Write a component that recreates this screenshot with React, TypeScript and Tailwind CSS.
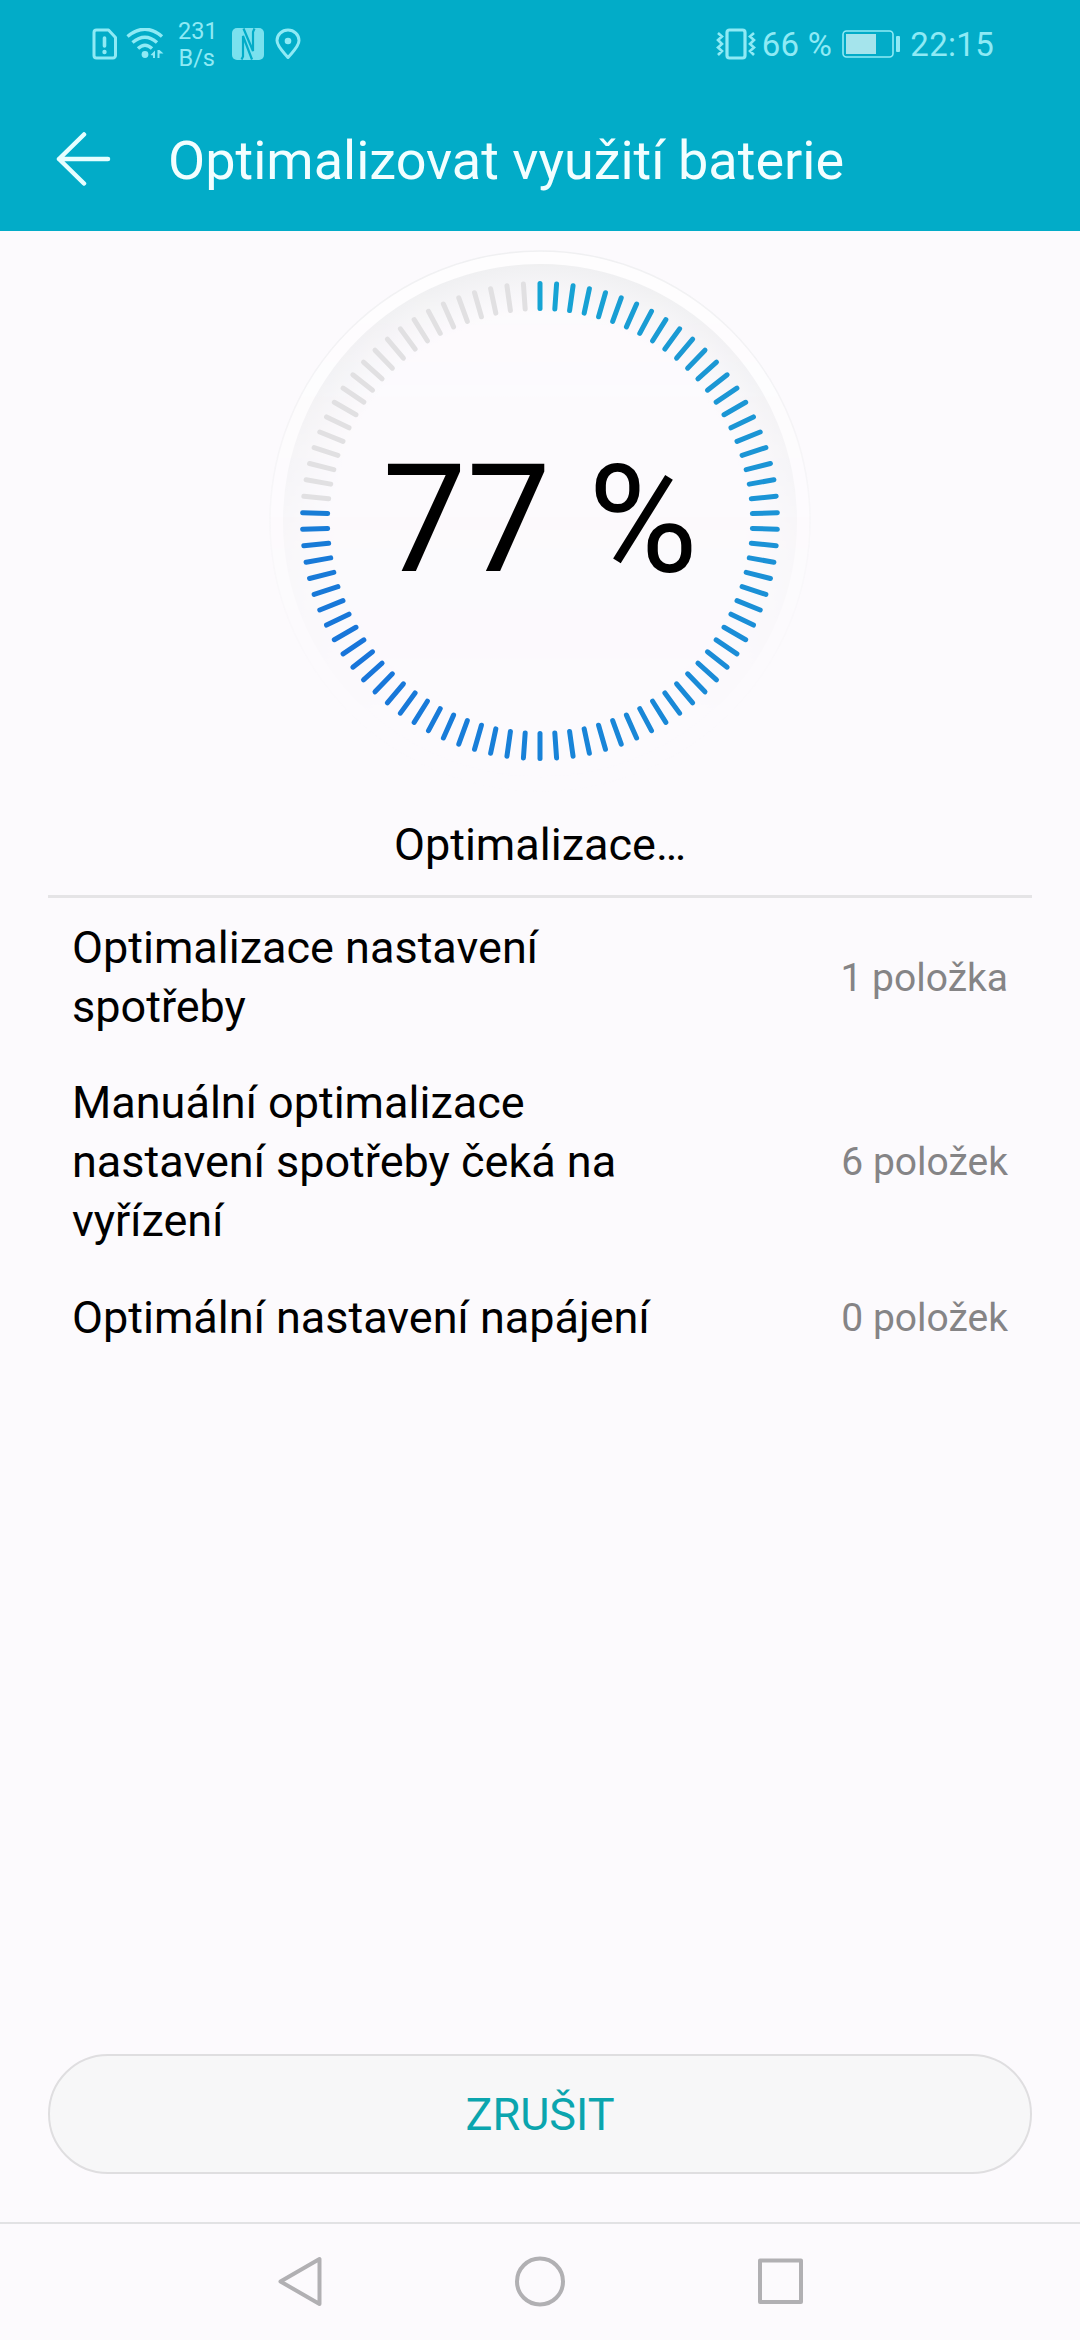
import React from 'react';

// ── Types ─────────────────────────────────────────────────────────────

interface OptimizationGroup {
  title: string;
  count: string;
}

// ── Constants ─────────────────────────────────────────────────────────

const PROGRESS = 77;
const TICK_COUNT = 90;
const CENTER = 271;

const GROUPS: OptimizationGroup[] = [
  { title: 'Optimalizace nastavení spotřeby', count: '1 položka' },
  {
    title: 'Manuální optimalizace nastavení spotřeby čeká na vyřízení',
    count: '6 položek',
  },
  { title: 'Optimální nastavení napájení', count: '0 položek' },
];

// Sweep stops: [position on the dial 0-1, r, g, b]
const SWEEP: [number, number, number, number][] = [
  [0, 22, 164, 212],
  [0.12, 27, 152, 212],
  [0.25, 27, 147, 214],
  [0.5, 24, 130, 216],
  [0.65, 24, 117, 218],
  [0.77, 24, 126, 214],
];

const tickColor = (pos: number): string => {
  for (let i = 1; i < SWEEP.length; i++) {
    const a = SWEEP[i - 1];
    const b = SWEEP[i];
    if (pos <= b[0]) {
      const t = (pos - a[0]) / (b[0] - a[0]);
      const mix = (n: number) => Math.round(a[n] + (b[n] - a[n]) * t);
      return `rgb(${mix(1)},${mix(2)},${mix(3)})`;
    }
  }
  return '#187ed6';
};

// ── Status bar ────────────────────────────────────────────────────────

const StatusBar: React.FC = () => (
  <div className="flex h-[88px] items-center justify-between pl-[92px] pr-[86px] text-[#8feaf5]">
    <div className="flex items-center">
      {/* SIM warning */}
      <svg className="h-8 w-[26px]" viewBox="0 0 26 32" fill="none" stroke="currentColor">
        <path d="M4.5 2h12l7 7.500v18a2.500 2.500 0 0 1-2.500 2.500H4.500A2.500 2.500 0 0 1 2 27.500v-23A2.500 2.500 0 0 1 4.500 2z" strokeWidth="3" strokeLinejoin="round" />
        <path d="M12.500 10v8" strokeWidth="3.600" strokeLinecap="round" />
        <circle cx="12.500" cy="24" r="2.200" fill="currentColor" stroke="none" />
      </svg>
      {/* Wi-Fi with traffic arrows */}
      <svg className="ml-2 h-8 w-[38px]" viewBox="0 0 38 32" fill="none" stroke="currentColor" strokeWidth="3.400">
        <path d="M1.500 8.500Q19-6 36 8.500" />
        <path d="M6.500 14.500Q19 4 31 14.500" />
        <path d="M12 20.500q7-6.500 14 0" />
        <circle cx="19" cy="26.500" r="3.400" fill="currentColor" stroke="none" />
        <path d="M24.500 27l4.500-4.500V30h-2v-2.500zM31.500 22v8h2v-4.500h4L33.500 22z" fill="currentColor" stroke="none" />
      </svg>
      <div className="ml-[14px] w-[37px] pt-px text-right text-[23.500px] leading-[27px]">
        <div>231</div>
        <div>B/s</div>
      </div>
      {/* NFC */}
      <svg className="ml-[17px] h-8 w-8" viewBox="0 0 32 32" fill="none">
        <rect width="32" height="32" rx="5" fill="currentColor" opacity=".85" />
        <path d="M9.500 31.500l1.500-3V8l9 23.500M11.500.5L21 23V4l1.500-3.500" stroke="#02acc8" strokeWidth="2.200" />
      </svg>
      {/* Location */}
      <svg className="ml-[11px] h-8 w-[26px]" viewBox="0 0 26 32" fill="none" stroke="currentColor">
        <path d="M13 29.500C9 24.500 2 18.500 2 12.500a11 10.500 0 0 1 22 0c0 6-7 12-11 17z" strokeWidth="3" strokeLinejoin="round" />
        <circle cx="13" cy="13" r="3.300" fill="currentColor" stroke="none" />
      </svg>
    </div>

    <div className="flex items-center text-[33px] leading-[40px]">
      {/* Vibrate */}
      <svg className="h-8 w-10" viewBox="0 0 40 32" fill="none" stroke="currentColor">
        <rect x="11" y="2" width="18" height="28" rx="2.500" strokeWidth="3.200" />
        <path d="M2 5l4 3.500-4 3.500 4 4-4 3.500 4 3.500-4 4M38 5l-4 3.500 4 3.500-4 4 4 3.500-4 3.500 4 4" strokeWidth="2.600" />
      </svg>
      <span className="ml-[6px] pt-[2px] whitespace-pre tracking-[0.300px]">66 %</span>
      <svg className="ml-[10px] h-7 w-[59px]" viewBox="0 0 59 28">
        <rect x="1" y="1" width="50" height="26" rx="3.500" fill="none" stroke="currentColor" strokeWidth="1.600" />
        <rect x="4" y="4" width="30" height="20" fill="#a5e4ec" />
        <rect x="54" y="6" width="4" height="16" rx="1" fill="currentColor" />
      </svg>
      <span className="ml-[9px] pt-[2px] tracking-[0.300px]">22:15</span>
    </div>
  </div>
);

// ── Dial ──────────────────────────────────────────────────────────────

const ProgressDial: React.FC = () => {
  const filled = Math.floor((PROGRESS / 100) * TICK_COUNT);

  return (
    <div className="relative mx-auto mt-[19px] h-[542px] w-[542px]">
      <svg className="h-full w-full" viewBox="0 0 542 542">
        <defs>
          <radialGradient id="dialRing" gradientUnits="userSpaceOnUse" cx={CENTER} cy={CENTER} r="257">
            <stop offset="0.800" stopColor="#fcfafd" />
            <stop offset="1" stopColor="#efeff1" />
          </radialGradient>
          <linearGradient id="dialFade" x1="0" y1="0" x2="0" y2="1">
            <stop offset="0" stopColor="#fff" />
            <stop offset="0.250" stopColor="#fff" stopOpacity="0.700" />
            <stop offset="0.550" stopColor="#fff" stopOpacity="0.250" />
            <stop offset="0.850" stopColor="#fff" stopOpacity="0.030" />
          </linearGradient>
          <mask id="dialMask">
            <rect width="542" height="542" fill="url(#dialFade)" />
          </mask>
        </defs>
        <g mask="url(#dialMask)">
          <circle cx={CENTER} cy={CENTER} r="270" fill="#fefdfe" stroke="#f0f0f2" strokeWidth="1.500" />
          <circle cx={CENTER} cy={CENTER} r="257" fill="url(#dialRing)" />
        </g>
        {Array.from({ length: TICK_COUNT }, (_, i) => (
          <line
            key={i}
            x1={CENTER}
            x2={CENTER}
            y1={CENTER - 237.500}
            y2={CENTER - 212.500}
            stroke={i < filled ? tickColor(i / TICK_COUNT) : '#e1e0e2'}
            strokeWidth="5"
            strokeLinecap="round"
            transform={`rotate(${(i * 360) / TICK_COUNT} ${CENTER} ${CENTER})`}
          />
        ))}
      </svg>
      <div className="absolute inset-0 flex items-center justify-center pb-[2px] text-[150px] leading-none text-black">
        {PROGRESS} %
      </div>
    </div>
  );
};

// ── Navigation bar ────────────────────────────────────────────────────

const NavigationBar: React.FC = () => (
  <div className="flex h-[118px] items-center justify-between border-t-2 border-[#e2e2e4] pl-[276px] pr-[274px] text-[#b1b0b3]">
    <svg className="h-[52px] w-[50px]" viewBox="0 0 50 52" fill="none" stroke="currentColor" strokeWidth="4" strokeLinejoin="round">
      <path d="M43.500 3v45L4.500 25.500z" />
    </svg>
    <svg className="h-[52px] w-[52px]" viewBox="0 0 52 52" fill="none" stroke="currentColor" strokeWidth="4">
      <circle cx="25" cy="25.500" r="23" />
    </svg>
    <svg className="h-[52px] w-[50px]" viewBox="0 0 50 52" fill="none" stroke="currentColor" strokeWidth="4" strokeLinejoin="round">
      <rect x="4" y="4.500" width="41" height="41.500" />
    </svg>
  </div>
);

// ── Screen ────────────────────────────────────────────────────────────

export default function App() {
  return (
    <div className="flex h-[2340px] w-[1080px] flex-col overflow-hidden bg-[#fcfafd] font-['Roboto',sans-serif] text-black">
      <header className="h-[231px] shrink-0 bg-[#02acc8]">
        <StatusBar />
        <div className="flex h-[143px] items-center pl-[56px] text-[#e6feff]">
          <svg className="mb-[1px] h-[56px] w-[55px]" viewBox="0 0 55 56" fill="none" stroke="currentColor" strokeWidth="4.500" strokeLinecap="round" strokeLinejoin="round">
            <path d="M52 28H3M28 3.500L3 28l25 24.500" />
          </svg>
          <h1 className="ml-[57px] pt-[3px] text-[54px] leading-[64px] text-[#f2feff]">Optimalizovat využití baterie</h1>
        </div>
      </header>

      <main className="flex flex-1 flex-col px-12">
        <ProgressDial />
        <p className="mt-[26px] h-[77px] text-center text-[45px] leading-[53px]">Optimalizace…</p>

        <ul className="border-t-[3px] border-[#e5e4e6] pt-[2px]">
          {GROUPS.map((group) => (
            <li key={group.title} className="flex items-center justify-between px-6 py-[19px]">
              <span className="w-[580px] text-[45px] leading-[58.700px]">{group.title}</span>
              <span className="text-[39px] leading-[46px] text-[#858486]">{group.count}</span>
            </li>
          ))}
        </ul>

        <button
          type="button"
          className="mb-12 mt-auto h-[120px] rounded-full border-2 border-[#dfdee0] bg-[#f7f7f8] pt-[2px] text-[45px] text-[#0ba5ae]"
        >
          ZRUŠIT
        </button>
      </main>

      <NavigationBar />
    </div>
  );
}
